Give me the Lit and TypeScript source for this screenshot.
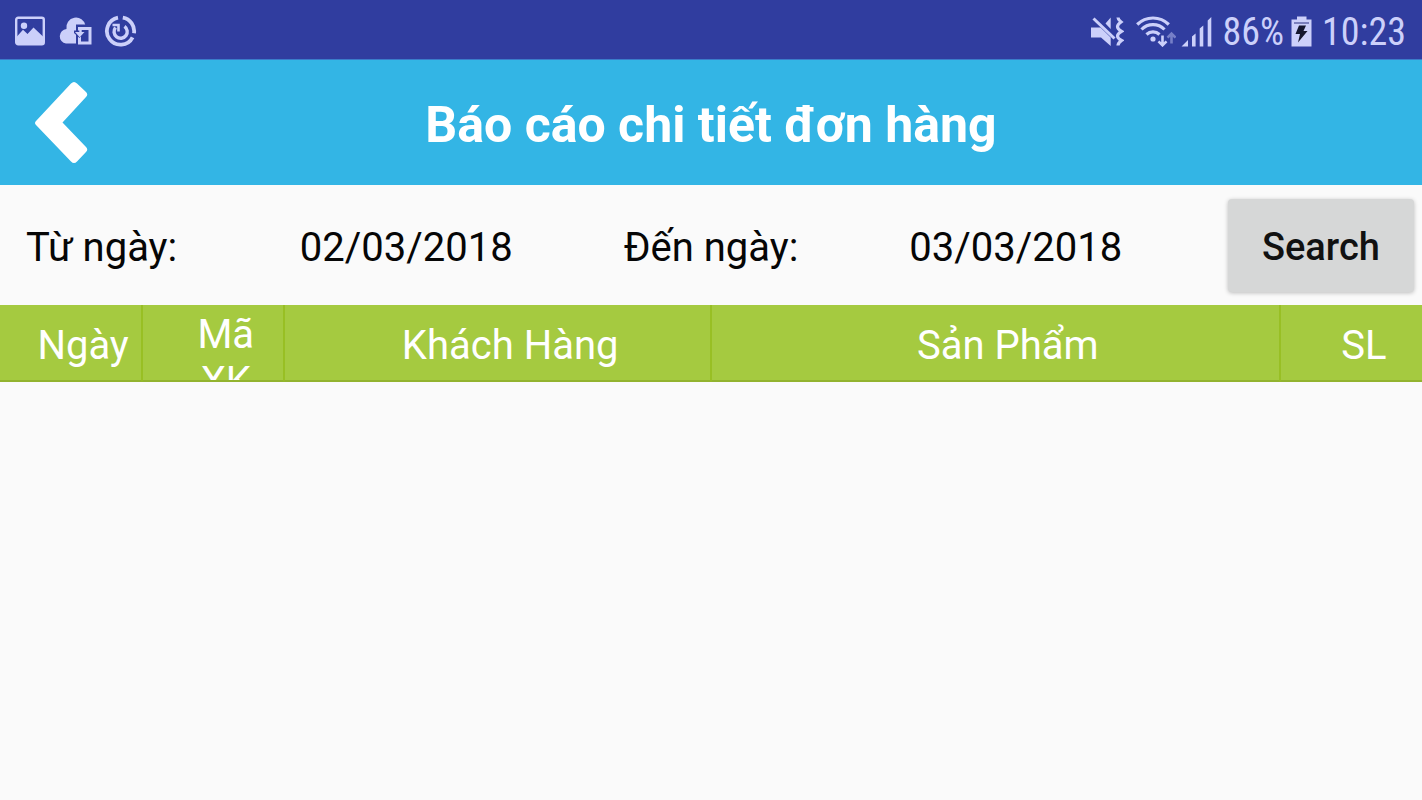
import { LitElement, html, css } from "lit";
import { customElement, state } from "lit/decorators.js";

interface Column {
  label: string;
  weight: number;
}

@customElement("status-bar")
export class StatusBar extends LitElement {
  static styles = css`
    :host {
      display: flex;
      justify-content: space-between;
      align-items: center;
      height: 60px;
      padding: 0 16px 0 14px;
      box-sizing: border-box;
      background: #303d9f;
      border-bottom: 1px solid #3b7cca;
      color: #ccd0fa;
      font: 38px/44px "Roboto Condensed", Roboto, sans-serif;
    }
    .group {
      display: flex;
      align-items: center;
    }
    .left {
      gap: 12px;
    }
    svg {
      display: block;
      flex: none;
    }
    .reading {
      padding-top: 4px;
    }
    .mute {
      margin-right: 12px;
    }
    .signal {
      margin: 0 10px 0 5px;
    }
    .battery {
      margin: 0 10px 0 7px;
    }
  `;

  render() {
    return html`
      <div class="group left">
        <svg width="32" height="34" viewBox="0 0 32 34" aria-hidden="true">
          <rect x="2.200" y="4.700" width="27.600" height="26.600" rx="2" fill="none" stroke="currentColor" stroke-width="2.400" />
          <circle cx="10" cy="12.800" r="3.200" fill="currentColor" />
          <path d="M2.500 24l6.500-7.200 4.500 4.200 6-6.500 10 9.500v7h-27z" fill="currentColor" />
        </svg>
        <svg width="34" height="34" viewBox="0 0 34 34" aria-hidden="true">
          <path
            d="M8 30.500A7.300 7.300 0 0 1 8.500 16 9.300 9.300 0 0 1 27.500 12.500L28 30.500z"
            fill="currentColor"
          />
          <path d="M18 11.500h16v21H18z" fill="#303d9f" />
          <path
            d="M21.500 20v-4.500h10.500v14.500h-10.500v-7"
            fill="none"
            stroke="currentColor"
            stroke-width="3"
          />
          <path d="M16 17.500h9l2 .5-5.500 7-5.500-5z" fill="#303d9f" />
          <path d="M27.500 15.500h-5v5" fill="none" stroke="currentColor" stroke-width="2.400" />
          <path d="M17 19h9.500l-4.800 5.200z" fill="currentColor" />
        </svg>
        <svg width="34" height="34" viewBox="0 0 34 34" fill="none" stroke="currentColor" aria-hidden="true">
          <path d="M14 4.700A13.600 13.600 0 1 0 28.600 24.300M30 20.200A13.600 13.600 0 0 0 18.800 4.700" stroke-width="3.800" />
          <path d="M11.500 14.500A6.600 6.600 0 1 0 20.500 13.300" stroke-width="3.400" />
          <path d="M8.500 12h6v6.500" stroke-width="2.600" />
        </svg>
      </div>
      <div class="group">
        <svg class="mute" width="34" height="34" viewBox="0 0 34 34" aria-hidden="true">
          <path d="M1 14.500h9.500l10.200 10V33L11 24.500H1zM15.500 10.500l5.200-6V16z" fill="currentColor" />
          <path
            d="M3.500 5.500l21 20"
            fill="none"
            stroke="currentColor"
            stroke-width="3"
          />
          <path
            d="M28 4.500q0 2 3 4.500-3.500 2.500-3.500 4.700t4 4.600q-4 2.400-4 4.700t4 4.500q-3.500 2.500-3.500 5"
            fill="none"
            stroke="currentColor"
            stroke-width="3.200"
          />
        </svg>
        <svg width="40" height="34" viewBox="0 0 40 34" fill="none" stroke="currentColor" aria-hidden="true">
          <path d="M1.200 11.500a22.500 22.500 0 0 1 31.600 0M5.500 16.500a16 16 0 0 1 23 0M10.500 21.500a9.500 9.500 0 0 1 13 0" stroke-width="3.200" />
          <circle cx="17" cy="26" r="2.600" fill="currentColor" stroke="none" />
          <path d="M26.500 22.500v9M22.500 28.300l4 4 4-4" stroke-width="2.600" />
          <path d="M35.500 30.500v-9M31.500 24.700l4-4 4 4" stroke-width="2.600" opacity=".45" />
        </svg>
        <svg class="signal" width="32" height="34" viewBox="0 0 32 34" fill="currentColor" aria-hidden="true">
          <path d="M.5 33.500l6.500-6.500v6.500zM11 23.500l3.600-3v13H11zM18.700 15.500l3.600-3v21h-3.600zM26.700 7.500l3.600-3.500v29.500h-3.600z" />
        </svg>
        <span class="reading">86%</span>
        <svg class="battery" width="21" height="34" viewBox="0 0 21 34" aria-hidden="true">
          <path d="M6 3.500h9.500v3h5v27H.5v-27H6z" fill="currentColor" />
          <path d="M3 10h15" stroke="#7b80bd" stroke-width="2" />
          <path d="M8 12.500h7L12.500 18h4L7 29.500l2-8.500H4.500z" fill="#15172e" />
        </svg>
        <time class="reading">10:23</time>
      </div>
    `;
  }
}

@customElement("app-root")
export class AppRoot extends LitElement {
  static styles = css`
    :host {
      display: block;
      min-height: 100vh;
      background: #fafafa;
      color: #060606;
      font: 40px/47px Roboto, sans-serif;
    }
    .toolbar {
      display: grid;
      grid-template-columns: 124px 1fr 124px;
      align-items: center;
      height: 125px;
      background: #33b5e5;
      color: #fff;
    }
    .back {
      display: flex;
      padding: 20px 34px;
      border: 0;
      background: none;
      color: inherit;
    }
    .title {
      margin: 0;
      padding-top: 4px;
      text-align: center;
      font-size: 50px;
      line-height: 60px;
      font-weight: 700;
      white-space: nowrap;
    }
    .filter {
      display: grid;
      grid-template-columns: 1fr 2fr 1fr 2fr 1fr;
      align-items: center;
      height: 120px;
      text-align: center;
      white-space: nowrap;
    }
    .caption,
    .date {
      padding: 4px 0 0;
    }
    .date {
      min-width: 0;
      border: 0;
      background: none;
      color: inherit;
      font: inherit;
      text-align: center;
    }
    .search {
      height: 93px;
      margin: 0 8px 0 9px;
      padding: 4px 0 0;
      border: 0;
      border-radius: 4px;
      background: #d6d7d7;
      box-shadow: 0 1px 4px rgba(0, 0, 0, 0.25);
      color: #111;
      font: inherit;
      font-size: 38px;
      font-weight: 500;
    }
    .orders {
      width: 100%;
      table-layout: fixed;
      border-collapse: separate;
      border-spacing: 0;
      background: #a5ca40;
      color: #fff;
    }
    .head {
      padding: 0;
      border: 0 solid #98bf24;
      border-width: 0 1px 2px;
      border-bottom-color: #92b32f;
      font-weight: 400;
    }
    .head:first-child {
      border-left: 0;
    }
    .head:last-child {
      border-right: 0;
    }
    .label {
      display: flex;
      justify-content: center;
      align-items: safe center;
      height: 75px;
      box-sizing: border-box;
      padding: 6px 8px 0 33px;
      overflow: hidden;
    }
  `;

  private columns: Column[] = [
    { label: "Ngày", weight: 10 },
    { label: "Mã XK", weight: 10 },
    { label: "Khách Hàng", weight: 30 },
    { label: "Sản Phẩm", weight: 40 },
    { label: "SL", weight: 10 },
  ];

  @state() private from = "02/03/2018";
  @state() private to = "03/03/2018";

  render() {
    return html`
      <status-bar></status-bar>
      <header class="toolbar">
        <button class="back" aria-label="Back">
          <svg width="54" height="84" viewBox="0 0 54 84" aria-hidden="true">
            <path
              d="M37 2.500q3-3 6 0L52 11q2.500 2.500 0 5L28.500 41.500 52 66q2.500 2.500 0 5l-9 9.500q-3 3-6 0L2 44q-2-2 0-4z"
              fill="currentColor"
            />
          </svg>
        </button>
        <h1 class="title">Báo cáo chi tiết đơn hàng</h1>
      </header>
      <form class="filter" @submit=${(e: Event) => e.preventDefault()}>
        <label class="caption" for="from">Từ ngày:</label>
        <input
          id="from"
          class="date"
          type="text"
          .value=${this.from}
          @change=${(e: Event) => (this.from = (e.target as HTMLInputElement).value)}
        />
        <label class="caption" for="to">Đến ngày:</label>
        <input
          id="to"
          class="date"
          type="text"
          .value=${this.to}
          @change=${(e: Event) => (this.to = (e.target as HTMLInputElement).value)}
        />
        <button class="search" type="submit">Search</button>
      </form>
      <table class="orders">
        <colgroup>
          ${this.columns.map((c) => html`<col style="width:${c.weight}%" />`)}
        </colgroup>
        <thead>
          <tr>
            ${this.columns.map(
              (c) => html`<th class="head" scope="col"><div class="label">${c.label}</div></th>`
            )}
          </tr>
        </thead>
      </table>
    `;
  }
}
